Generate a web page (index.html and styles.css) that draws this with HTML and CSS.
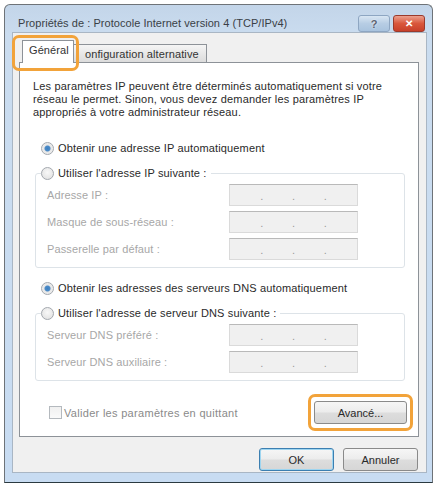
FILE: index.html
```html
<!DOCTYPE html>
<html lang="fr">
<head>
<meta charset="utf-8">
<title>Propriétés de : Protocole Internet version 4 (TCP/IPv4)</title>
<link rel="stylesheet" href="styles.css">
</head>
<body>
<div class="window">
  <div class="titlebar">
    <span class="title">Propriétés de : Protocole Internet version 4 (TCP/IPv4)</span>
    <div class="caption-buttons">
      <span class="cap help">?</span>
      <span class="cap close">✕</span>
    </div>
  </div>
  <div class="client">
    <div class="tabs">
      <div class="tab active hl hl-tab">Général</div>
      <div class="tab">onfiguration alternative</div>
    </div>
    <div class="panel">
      <p class="intro">Les paramètres IP peuvent être déterminés automatiquement si votre<br>réseau le permet. Sinon, vous devez demander les paramètres IP<br>appropriés à votre administrateur réseau.</p>

      <div class="radio-row first"><span class="radio checked"></span><span>Obtenir une adresse IP automatiquement</span></div>
      <fieldset class="group">
        <legend class="radio-row"><span class="radio"></span><span>Utiliser l'adresse IP suivante :</span></legend>
        <div class="field"><span class="label">Adresse IP :</span><span class="ipbox"><i></i>.<i></i>.<i></i>.<i></i></span></div>
        <div class="field"><span class="label">Masque de sous-réseau :</span><span class="ipbox"><i></i>.<i></i>.<i></i>.<i></i></span></div>
        <div class="field"><span class="label">Passerelle par défaut :</span><span class="ipbox"><i></i>.<i></i>.<i></i>.<i></i></span></div>
      </fieldset>

      <div class="radio-row second"><span class="radio checked"></span><span>Obtenir les adresses des serveurs DNS automatiquement</span></div>
      <fieldset class="group">
        <legend class="radio-row"><span class="radio"></span><span>Utiliser l'adresse de serveur DNS suivante :</span></legend>
        <div class="field"><span class="label">Serveur DNS préféré :</span><span class="ipbox"><i></i>.<i></i>.<i></i>.<i></i></span></div>
        <div class="field"><span class="label">Serveur DNS auxiliaire :</span><span class="ipbox"><i></i>.<i></i>.<i></i>.<i></i></span></div>
      </fieldset>

      <div class="bottom-row">
        <div class="check-row"><span class="checkbox"></span><span class="muted">Valider les paramètres en quittant</span></div>
        <button class="btn advanced hl hl-btn">Avancé...</button>
      </div>
    </div>
    <div class="dialog-buttons">
      <button class="btn default">OK</button>
      <button class="btn">Annuler</button>
    </div>
  </div>
</div>
</body>
</html>
```

FILE: styles.css
```css
* { box-sizing: border-box; }
html, body { margin: 0; background: #ffffff; }
body {
  padding: 4px 0 0 4px;
  font-family: "Liberation Sans", Arial, sans-serif;
  font-size: 11px;
  color: #2a2a2a;
}
.window {
  width: 429px;
  height: 479px;
  border: 1px solid #6e7378;
  border-bottom-color: #2b3a40;
  border-radius: 6px 6px 0 0;
  background: linear-gradient(180deg, #c3d5e9 0px, #cadcef 30px, #c8dcf2 100%);
  display: flex;
  flex-direction: column;
}
.titlebar {
  height: 27px;
  padding: 10px 7px 0 12px;
  display: flex;
  align-items: flex-start;
  justify-content: space-between;
}
.title {
  font-size: 11px;
  color: #3a3f46;
  line-height: 17px;
  padding-left: 1px;
  letter-spacing: 0.05px;
}
.caption-buttons { display: flex; gap: 3px; }
.cap {
  width: 32px;
  height: 17px;
  border-radius: 3px;
  display: flex;
  align-items: center;
  justify-content: center;
  font-weight: bold;
  font-size: 11px;
  color: #ffffff;
}
.help {
  background: linear-gradient(180deg, #d9e6f3 0%, #b7cde4 50%, #a9c3de 100%);
  border: 1px solid #8ea6c2;
  color: #5a6270;
  text-shadow: 0 0 2px #ffffff;
}
.close {
  background: linear-gradient(180deg, #eca08e 0%, #d9573c 50%, #c8402a 100%);
  border: 1px solid #9a3a2c;
  font-size: 10px;
}
.client {
  height: 441px;
  margin: 0 5px 0 7px;
  background: #f0f0f0;
  border: 1px solid #a9b6c4;
  display: flex;
  flex-direction: column;
}
.tabs {
  display: flex;
  align-items: flex-end;
  margin: 7px 0 0 9px;
  position: relative;
  z-index: 1;
}
.tab {
  height: 18px;
  padding: 0 4px 0 11px;
  border: 1px solid #8d9298;
  border-bottom: none;
  border-left: none;
  background: linear-gradient(180deg, #f5f5f5 0%, #e8e8e8 50%, #dcdcdc 100%);
  display: flex;
  align-items: center;
  width: 133px;
  color: #333;
  letter-spacing: 0.1px;
  white-space: nowrap;
}
.tab.active {
  height: 23px;
  width: 52px;
  padding: 0 0 0 6px;
  border-left: 1px solid #8d9298;
  background: #ffffff;
  margin-bottom: -1px;
  align-items: flex-start;
  padding-top: 3px;
}
.hl { position: relative; }
.hl::after {
  content: "";
  position: absolute;
  border: 3px solid #f2a33a;
  border-radius: 7px;
  pointer-events: none;
}
.hl-tab::after { left: -11px; right: -6px; top: -6px; bottom: -8px; }
.hl-btn::after { left: -7px; right: -7px; top: -8px; bottom: -8px; }
.panel {
  margin-left: 6px;
  width: 400px;
  height: 375px;
  background: #ffffff;
  border: 1px solid #8d9298;
  display: flex;
  flex-direction: column;
}
.intro {
  margin: 17px 0 0 13px;
  line-height: 13px;
  color: #2a2a2a;
  letter-spacing: 0.17px;
  white-space: nowrap;
}
.radio-row {
  display: flex;
  align-items: center;
  gap: 4px;
  height: 16px;
  color: #2a2a2a;
  letter-spacing: 0.15px;
  white-space: nowrap;
}
.radio-row.first { margin: 21px 0 0 21px; }
.radio-row.second { margin: 12px 0 0 21px; }
.radio {
  width: 13px;
  height: 13px;
  border-radius: 50%;
  border: 1px solid #a3a8ae;
  background: radial-gradient(circle at 50% 40%, #f8f8f8 0%, #dedede 100%);
  flex: none;
}
.radio.checked {
  background: radial-gradient(circle, #3f7fbf 0px, #4a8bc8 2.5px, #e6e6e6 3.5px, #f4f4f4 100%);
}
.group {
  margin: 9px 0 0 15px;
  width: 370px;
  padding: 0 0 7px 0;
  border: 1px solid #dde3e8;
  border-radius: 3px;
}
.group legend {
  margin-left: 5px;
  padding: 0 4px 0 0;
}
.field {
  display: flex;
  align-items: center;
  height: 22px;
  margin-top: 5px;
  padding-left: 11px;
}
.group legend + .field { margin-top: 3px; }
.label {
  width: 182px;
  color: #a7a7a7;
  letter-spacing: 0.12px;
  white-space: nowrap;
}
.ipbox {
  width: 129px;
  height: 22px;
  border: 1px solid #dadada;
  border-top-color: #b9b9b9;
  background: #f0f0f0;
  display: flex;
  align-items: center;
  color: #9a9a9a;
  padding-top: 2px;
}
.ipbox i { flex: 1; }
.ipbox i:first-child, .ipbox i:last-child { flex: 1.05; }
.bottom-row {
  display: flex;
  align-items: center;
  justify-content: space-between;
  margin: 20px 11px 0 29px;
}
.check-row { display: flex; align-items: center; gap: 2px; }
.checkbox {
  width: 13px;
  height: 13px;
  border: 1px solid #b4b9be;
  background: linear-gradient(180deg, #f0f0f0, #fafafa);
}
.muted { color: #8a8a8a; letter-spacing: 0.3px; white-space: nowrap; }
.btn {
  width: 75px;
  height: 23px;
  font-family: "Liberation Sans", Arial, sans-serif;
  font-size: 11px;
  color: #2a2a2a;
  border: 1px solid #8a8a8a;
  border-radius: 3px;
  background: linear-gradient(180deg, #f6f6f6 0%, #ececec 48%, #dddddd 52%, #d6d6d6 100%);
  padding: 0;
}
.btn.advanced { width: 93px; }
.btn.default {
  border-color: #3c7fb1;
  box-shadow: inset 0 0 0 1px #9ed5f0;
}
.dialog-buttons {
  display: flex;
  justify-content: flex-end;
  gap: 9px;
  margin: 11px 8px 0 0;
}
```
